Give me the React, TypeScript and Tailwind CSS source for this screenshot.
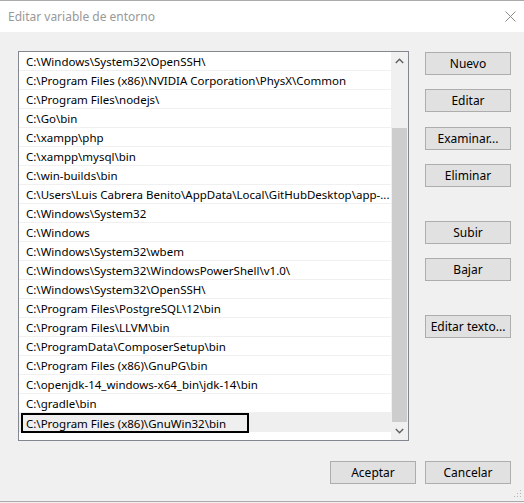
import React from "react";

const rows = [
  "C:\\Windows\\System32\\OpenSSH\\",
  "C:\\Program Files (x86)\\NVIDIA Corporation\\PhysX\\Common",
  "C:\\Program Files\\nodejs\\",
  "C:\\Go\\bin",
  "C:\\xampp\\php",
  "C:\\xampp\\mysql\\bin",
  "C:\\win-builds\\bin",
  "C:\\Users\\Luis Cabrera Benito\\AppData\\Local\\GitHubDesktop\\app-...",
  "C:\\Windows\\System32",
  "C:\\Windows",
  "C:\\Windows\\System32\\wbem",
  "C:\\Windows\\System32\\WindowsPowerShell\\v1.0\\",
  "C:\\Windows\\System32\\OpenSSH\\",
  "C:\\Program Files\\PostgreSQL\\12\\bin",
  "C:\\Program Files\\LLVM\\bin",
  "C:\\ProgramData\\ComposerSetup\\bin",
  "C:\\Program Files (x86)\\GnuPG\\bin",
  "C:\\openjdk-14_windows-x64_bin\\jdk-14\\bin",
  "C:\\gradle\\bin",
];

function Btn({ label, className = "" }: { label: string; className?: string }) {
  return (
    <div
      className={
        "w-[86px] h-[23px] bg-[#e1e1e1] border border-[#adadad] flex items-center justify-center text-[12px] text-black " +
        className
      }
    >
      {label}
    </div>
  );
}

export default function App() {
  return (
    <div
      className="w-[524px] h-[503px] bg-[#f0f0f0] flex flex-col relative overflow-hidden"
      style={{ fontFamily: '"Noto Sans", "Liberation Sans", sans-serif' }}
    >
      <div className="h-[1px] bg-[#aaaaaa]" />
      <div className="h-[31px] bg-white flex items-center pl-[8px] text-[12px] text-[#999999] relative">
        <span>Editar variable de entorno</span>
        <svg
          className="absolute left-[505px] top-[10px]"
          width="11"
          height="11"
          viewBox="0 0 11 11"
        >
          <path d="M0.5 0.5 L10.5 10.5 M10.5 0.5 L0.5 10.5" stroke="#8a8a8a" strokeWidth="1" />
        </svg>
      </div>
      <div className="flex flex-1 pl-[18px] pt-[19px]">
        <div className="flex flex-col">
          <div className="w-[391px] h-[390px] border border-[#828790] bg-white flex">
            <div className="w-[373px] flex flex-col">
              {rows.map((r, i) => (
                <div
                  key={i}
                  className="h-[19px] border-b border-[#f0f0f0] flex items-center pl-[7px] pt-[2px] text-[11.5px] text-black whitespace-nowrap overflow-hidden"
                >
                  {r}
                </div>
              ))}
              <div className="h-[19px] bg-[#efefef] flex items-center pl-[2px]">
                <div className="h-[20px] w-[228px] border-2 border-black flex items-center pl-[3px] pt-[2px] text-[11.5px] text-black whitespace-nowrap">
                  C:\Program Files (x86)\GnuWin32\bin
                </div>
              </div>
            </div>
            <div className="w-[17px] bg-[#f0f0f0] flex flex-col">
              <div className="h-[17px] flex items-center justify-center">
                <svg width="9" height="6" viewBox="0 0 9 6">
                  <path d="M0.8 5 L4.5 1.3 L8.2 5" stroke="#606060" strokeWidth="1.4" fill="none" />
                </svg>
              </div>
              <div className="h-[59px]" />
              <div className="h-[294px] mx-[1px] bg-[#cdcdcd]" />
              <div className="flex-1 flex items-center justify-center">
                <svg width="9" height="6" viewBox="0 0 9 6">
                  <path d="M0.8 1 L4.5 4.7 L8.2 1" stroke="#606060" strokeWidth="1.4" fill="none" />
                </svg>
              </div>
            </div>
          </div>
        </div>
        <div className="flex flex-col ml-[16px] pt-[1px]">
          <Btn label="Nuevo" />
          <Btn label="Editar" className="mt-[14px]" />
          <Btn label="Examinar..." className="mt-[15px]" />
          <Btn label="Eliminar" className="mt-[14px]" />
          <Btn label="Subir" className="mt-[34px]" />
          <Btn label="Bajar" className="mt-[14px]" />
          <Btn label="Editar texto..." className="mt-[34px]" />
        </div>
      </div>
      <div className="flex justify-end gap-[9px] pr-[13px] pb-[17px]">
        <Btn label="Aceptar" />
        <Btn label="Cancelar" />
      </div>
      <div className="h-[1px] bg-[#aaaaaa]" />
      <div className="h-[1px] bg-[#f0f0f0]" />
      <svg className="absolute left-[514px] top-[490px]" width="8" height="8" viewBox="0 0 8 8">
        <rect x="6" y="0" width="1" height="1" fill="#b5b5b5" />
        <rect x="3" y="3" width="1" height="1" fill="#b5b5b5" />
        <rect x="6" y="3" width="1" height="1" fill="#b5b5b5" />
        <rect x="0" y="6" width="1" height="1" fill="#b5b5b5" />
        <rect x="3" y="6" width="1" height="1" fill="#b5b5b5" />
        <rect x="6" y="6" width="1" height="1" fill="#b5b5b5" />
      </svg>
    </div>
  );
}
